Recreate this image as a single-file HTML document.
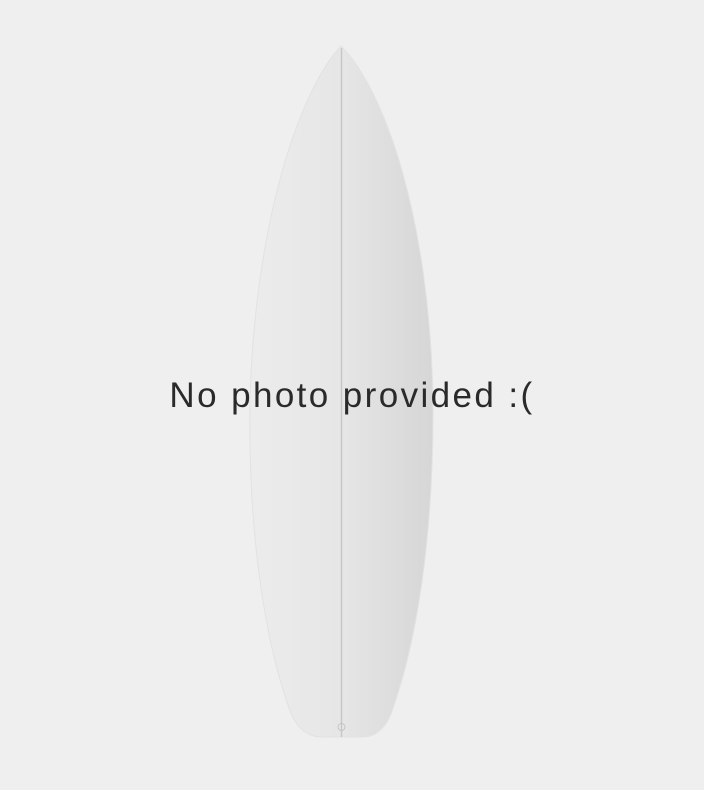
<!DOCTYPE html>
<html><head><meta charset="utf-8"><style>
html,body{margin:0;padding:0;background:#efefef;width:704px;height:790px;overflow:hidden}
.t{position:absolute;left:0;width:704px;top:376px;text-align:center;font-family:"Liberation Sans",sans-serif;font-size:35px;color:#2a2a2a;letter-spacing:2.4px}
</style></head><body>
<svg width="704" height="790" style="position:absolute;left:0;top:0">
<defs><linearGradient id="g" x1="0" x2="1" y1="0" y2="0">
<stop offset="0" stop-color="#ececec"/><stop offset="0.5" stop-color="#e6e6e6"/><stop offset="1" stop-color="#d6d6d6"/></linearGradient></defs>
<path d="M341,46 C300,90 255,220 250,400 C248,520 262,630 288,705 Q298,737 322,737 L362,737 Q385,737 394,705 C420,630 434,520 433,400 C430,220 385,90 341,46Z" fill="url(#g)" stroke="#e2e2e2" stroke-width="1"/>
<line x1="341.5" y1="48" x2="341.5" y2="737" stroke="#c9c6bf" stroke-width="1.4"/>
<circle cx="341.5" cy="727" r="3.5" fill="none" stroke="#c0bdb7" stroke-width="0.8"/>
</svg>
<div class="t">No photo provided :(</div>
</body></html>
